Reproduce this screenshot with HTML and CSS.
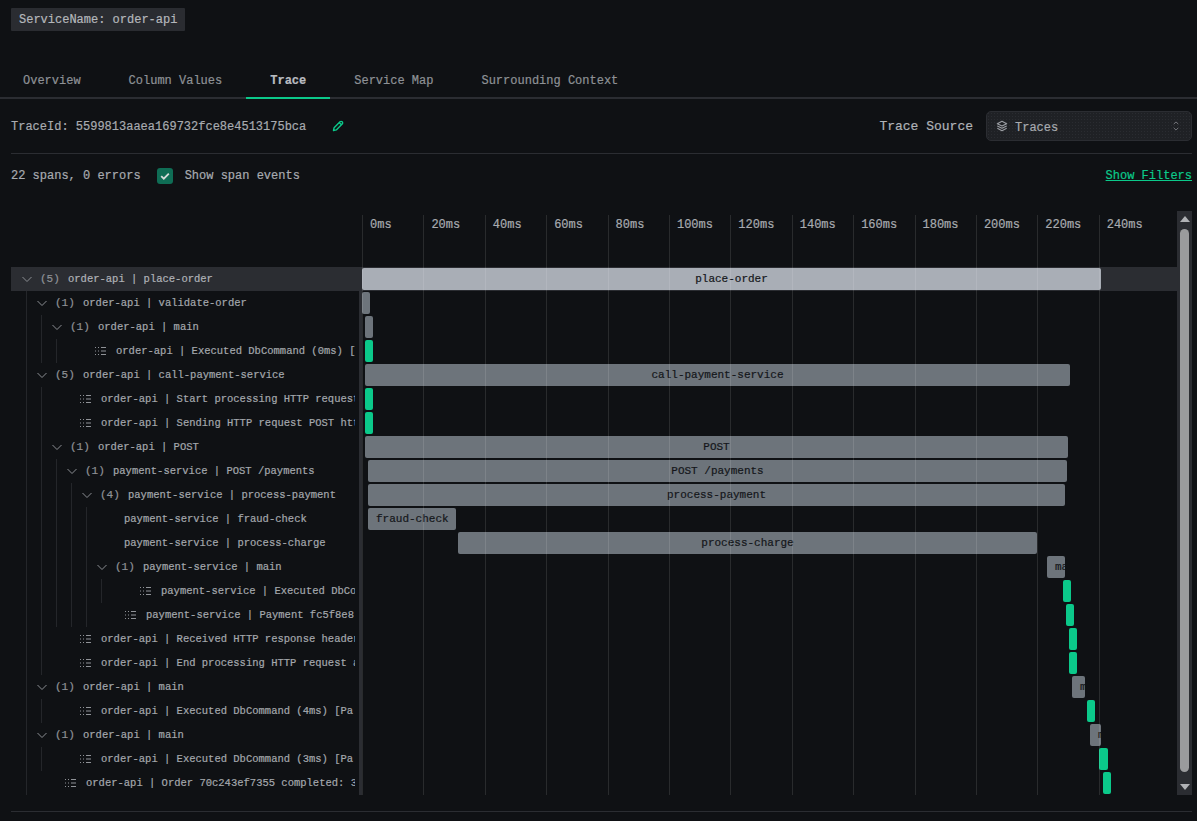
FILE: index.html
```html
<!DOCTYPE html>
<html lang="en">
<head>
<meta charset="utf-8">
<title>Trace</title>
<link rel="stylesheet" href="styles.css">
</head>
<body>
<svg class="defs" width="0" height="0" aria-hidden="true">
  <symbol id="chev" viewBox="0 0 14 14"><path d="M2.5 5l4.5 4.5L11.5 5" fill="none" stroke="currentColor" stroke-width="1"/></symbol>
  <symbol id="list" viewBox="0 0 12 10"><path d="M1 1.5h1M4 1.5h1M7 1.5h5M1 5h1M4 5h1M7 5h5M1 8.5h1M4 8.5h1M7 8.5h5" fill="none" stroke="currentColor" stroke-width="1"/></symbol>
</svg>
<main class="page">
  <div class="badge-row"><span class="badge">ServiceName: order-api</span></div>

  <nav class="tabs">
    <span class="tab">Overview</span>
    <span class="tab">Column Values</span>
    <span class="tab active">Trace</span>
    <span class="tab">Service Map</span>
    <span class="tab">Surrounding Context</span>
  </nav>

  <div class="idbar">
    <span class="traceid">TraceId: 5599813aaea169732fce8e4513175bca</span>
    <svg class="pencil" width="12" height="12" viewBox="0 0 12 12"><path d="M1.5 10.5l.6-2.8 5.9-5.9a1.3 1.3 0 0 1 2.2 2.2L4.3 9.9zM7.2 2.6l2.2 2.2" fill="none" stroke="currentColor" stroke-width="1.4" stroke-linejoin="round"/></svg>
    <span class="source-label">Trace Source</span>
    <div class="select">
      <svg class="layers" width="14" height="14" viewBox="0 0 24 24"><path d="M12 4l-8 4l8 4l8-4zM4 12l8 4l8-4M4 16l8 4l8-4" fill="none" stroke="currentColor" stroke-width="2" stroke-linejoin="round"/></svg>
      <span class="select-text">Traces</span>
      <svg class="updown" width="14" height="14" viewBox="0 0 24 24"><path d="M8 9l4-4l4 4M16 15l-4 4l-4-4" fill="none" stroke="currentColor" stroke-width="1.6"/></svg>
    </div>
  </div>

  <div class="summary">
    <span class="counts">22 spans, 0 errors</span>
    <span class="check"><svg width="12" height="12" viewBox="0 0 12 12"><path d="M2.2 6.2l2.6 2.5 5-5" fill="none" stroke="currentColor" stroke-width="1.8"/></svg></span>
    <span class="check-label">Show span events</span>
    <a class="filters" href="#">Show Filters</a>
  </div>

  <section class="trace">
    <div class="tree">
      <div class="tree-rows">
        <div class="row root"><svg class="chev"><use href="#chev"/></svg><span class="count">(5)</span><span class="name">order-api | place-order</span></div>
        <div class="group top">
          <div class="row"><svg class="chev"><use href="#chev"/></svg><span class="count">(1)</span><span class="name">order-api | validate-order</span></div>
          <div class="group">
            <div class="row"><svg class="chev"><use href="#chev"/></svg><span class="count">(1)</span><span class="name">order-api | main</span></div>
            <div class="group">
              <div class="row leaf"><svg class="lst"><use href="#list"/></svg><span class="name">order-api | Executed DbCommand (0ms) [</span></div>
            </div>
          </div>
          <div class="row"><svg class="chev"><use href="#chev"/></svg><span class="count">(5)</span><span class="name">order-api | call-payment-service</span></div>
          <div class="group">
            <div class="row leaf"><svg class="lst"><use href="#list"/></svg><span class="name">order-api | Start processing HTTP request</span></div>
            <div class="row leaf"><svg class="lst"><use href="#list"/></svg><span class="name">order-api | Sending HTTP request POST http</span></div>
            <div class="row"><svg class="chev"><use href="#chev"/></svg><span class="count">(1)</span><span class="name">order-api | POST</span></div>
            <div class="group">
              <div class="row"><svg class="chev"><use href="#chev"/></svg><span class="count">(1)</span><span class="name">payment-service | POST /payments</span></div>
              <div class="group">
                <div class="row"><svg class="chev"><use href="#chev"/></svg><span class="count">(4)</span><span class="name">payment-service | process-payment</span></div>
                <div class="group">
                  <div class="row leaf"><span class="name">payment-service | fraud-check</span></div>
                  <div class="row leaf"><span class="name">payment-service | process-charge</span></div>
                  <div class="row"><svg class="chev"><use href="#chev"/></svg><span class="count">(1)</span><span class="name">payment-service | main</span></div>
                  <div class="group">
                    <div class="row leaf"><svg class="lst"><use href="#list"/></svg><span class="name">payment-service | Executed DbCommand</span></div>
                  </div>
                  <div class="row leaf"><svg class="lst"><use href="#list"/></svg><span class="name">payment-service | Payment fc5f8e8</span></div>
                </div>
              </div>
            </div>
            <div class="row leaf"><svg class="lst"><use href="#list"/></svg><span class="name">order-api | Received HTTP response headers</span></div>
            <div class="row leaf"><svg class="lst"><use href="#list"/></svg><span class="name">order-api | End processing HTTP request after</span></div>
          </div>
          <div class="row"><svg class="chev"><use href="#chev"/></svg><span class="count">(1)</span><span class="name">order-api | main</span></div>
          <div class="group">
            <div class="row leaf"><svg class="lst"><use href="#list"/></svg><span class="name">order-api | Executed DbCommand (4ms) [Pa</span></div>
          </div>
          <div class="row"><svg class="chev"><use href="#chev"/></svg><span class="count">(1)</span><span class="name">order-api | main</span></div>
          <div class="group">
            <div class="row leaf"><svg class="lst"><use href="#list"/></svg><span class="name">order-api | Executed DbCommand (3ms) [Pa</span></div>
          </div>
          <div class="row leaf"><svg class="lst"><use href="#list"/></svg><span class="name">order-api | Order 70c243ef7355 completed: 3</span></div>
        </div>
      </div>
    </div>

    <div class="timeline">
      <div class="bars">
        <div class="lane hl"><div class="bar first" style="margin-left:0;width:739px">place-order</div></div>
        <div class="lane"><div class="bar empty" style="margin-left:0;width:8px"></div></div>
        <div class="lane"><div class="bar empty" style="margin-left:3px;width:8px"></div></div>
        <div class="lane"><div class="bar ev" style="margin-left:3px;width:8px"></div></div>
        <div class="lane"><div class="bar" style="margin-left:3px;width:705px">call-payment-service</div></div>
        <div class="lane"><div class="bar ev" style="margin-left:3px;width:8px"></div></div>
        <div class="lane"><div class="bar ev" style="margin-left:3px;width:8px"></div></div>
        <div class="lane"><div class="bar" style="margin-left:3px;width:703px">POST</div></div>
        <div class="lane"><div class="bar" style="margin-left:6px;width:699px">POST /payments</div></div>
        <div class="lane"><div class="bar" style="margin-left:6px;width:697px">process-payment</div></div>
        <div class="lane"><div class="bar" style="margin-left:6px;width:88px">fraud-check</div></div>
        <div class="lane"><div class="bar" style="margin-left:96px;width:579px">process-charge</div></div>
        <div class="lane"><div class="bar tight" style="margin-left:685px;width:18px">main</div></div>
        <div class="lane"><div class="bar ev" style="margin-left:701px;width:8px"></div></div>
        <div class="lane"><div class="bar ev" style="margin-left:704px;width:8px"></div></div>
        <div class="lane"><div class="bar ev" style="margin-left:707px;width:8px"></div></div>
        <div class="lane"><div class="bar ev" style="margin-left:707px;width:8px"></div></div>
        <div class="lane"><div class="bar tight" style="margin-left:710px;width:13px">main</div></div>
        <div class="lane"><div class="bar ev" style="margin-left:725px;width:8px"></div></div>
        <div class="lane"><div class="bar tight" style="margin-left:728px;width:11px">main</div></div>
        <div class="lane"><div class="bar ev" style="margin-left:737px;width:9px"></div></div>
        <div class="lane"><div class="bar ev" style="margin-left:741px;width:8px"></div></div>
      </div>
      <div class="ticks">
        <span class="tick">0ms</span><span class="tick">20ms</span><span class="tick">40ms</span><span class="tick">60ms</span><span class="tick">80ms</span><span class="tick">100ms</span><span class="tick">120ms</span><span class="tick">140ms</span><span class="tick">160ms</span><span class="tick">180ms</span><span class="tick">200ms</span><span class="tick">220ms</span><span class="tick">240ms</span>
      </div>
    </div>

    <div class="scrollbar">
      <span class="arrow up"></span>
      <span class="thumb"></span>
      <span class="arrow down"></span>
    </div>
  </section>

  <div class="foot"></div>
</main>
</body>
</html>
```
FILE: styles.css
```css
* { box-sizing: border-box; }
html, body { margin: 0; height: 100%; background: #0f1114; overflow: hidden; }
body { font-family: "Liberation Mono", "DejaVu Sans Mono", monospace; font-size: 12px; color: #a8abb0; -webkit-text-stroke: 0.2px; }
.defs { position: absolute; }
.page { display: flex; flex-direction: column; height: 821px; }

.badge-row { padding: 8px 0 0 11px; height: 31px; }
.badge { display: inline-block; height: 23px; line-height: 24px; padding: 0 8px; background: #2a2c31; color: #b4b7bb; border-radius: 1px; }

.tabs { display: flex; margin-top: 30px; height: 38px; border-bottom: 2px solid #2b2d32; }
.tab { height: 38px; padding: 0 24px; line-height: 40px; color: #8e9196; border-bottom: 2px solid transparent; }
.tab:first-child { margin-left: -1px; }
.tab.active { color: #b9bcc1; font-weight: 700; border-bottom-color: #0bc98a; }

.idbar { display: flex; align-items: center; height: 55px; margin: 0 5px 0 11px; border-bottom: 1px solid #2b2d32; }
.traceid { padding-top: 2px; }
.pencil { margin-left: 26px; color: #0bc98a; }
.source-label { margin-left: auto; font-size: 13px; color: #b0b3b8; }
.select { display: flex; align-items: center; width: 206px; height: 30px; margin-left: 13px; padding: 0 8px; background-color: #1f2125; background-image: radial-gradient(#2a2c31 0.6px, transparent 0.8px); background-size: 3px 3px; border: 1px solid #2b2d32; border-radius: 5px; }
.layers { color: #9a9da2; flex: none; }
.select-text { margin-left: 6px; margin-top: 4px; }
.updown { margin-left: auto; color: #77797e; }

.summary { display: flex; align-items: center; height: 42px; margin: 0 5px 0 11px; }
.counts, .check-label, .filters { padding-top: 2px; }
.check { display: flex; align-items: center; justify-content: center; width: 16px; height: 16px; margin-left: 16px; margin-top: 2px; background: #0f6d55; border-radius: 3px; color: #d5dbd9; }
.check-label { margin-left: 12px; }
.filters { margin-left: auto; color: #0bc98a; }

.trace { display: flex; height: 584px; margin-top: 15px; padding-left: 11px; margin-right: 5px; }
.tree { flex: none; width: 351px; padding-top: 56px; }
.tree-rows { border-right: 3px solid #2b2d32; height: 528px; }
.row { display: flex; align-items: center; height: 24px; padding-left: 8px; padding-right: 4px; font-size: 10.5px; color: #a4a8ad; white-space: nowrap; }
.row.root { background: #2b2d32; padding-left: 9px; color: #b0b3b8; }
.row.leaf { padding-left: 37px; }
.chev { flex: none; width: 14px; height: 14px; margin-right: 6px; color: #8b8e93; }
.lst { flex: none; width: 12px; height: 10px; margin-right: 10px; color: #8f9297; }
.count { flex: none; width: 19px; margin-right: 9px; font-size: 11px; color: #8f9297; }
.name { flex: 1; min-width: 0; overflow: hidden; }
.group { margin-left: 14px; border-left: 1px solid #24262a; }
.group.top { margin-left: 15px; }

.timeline { position: relative; flex: none; width: 815px; margin-top: 4px; }
.bars { margin-top: 52px; }
.lane { height: 24px; padding: 1px 0; }
.lane.hl { background: #2b2d32; }
.bar { height: 22px; line-height: 22px; padding: 0 8px; background: #6d747b; color: #14161a; border-radius: 2px; font-size: 11px; text-align: center; white-space: nowrap; overflow: hidden; }
.bar.tight { padding: 0 0 0 8px; text-align: left; }
.bar.empty { padding: 0; }
.bar.first { background-color: #a9aeb6; background-image: radial-gradient(#9297 0.5px, transparent 0.7px); background-size: 6px 6px; }
.bar.ev { background: #0bc98a; padding: 0; }
.ticks { position: absolute; top: 0; left: 0; bottom: 0; display: flex; pointer-events: none; }
.tick { flex: none; width: 61.4px; padding-left: 7px; line-height: 20px; border-left: 1px solid rgba(255, 255, 255, 0.11); white-space: nowrap; }

.scrollbar { display: flex; flex-direction: column; align-items: center; flex: none; width: 15px; padding: 5px 0; background: #2b2d32; }
.arrow { flex: none; width: 0; height: 0; border-left: 5px solid transparent; border-right: 5px solid transparent; }
.arrow.up { border-bottom: 6px solid #b0b2b5; }
.arrow.down { border-top: 6px solid #b0b2b5; }
.thumb { flex: 1; width: 9px; margin: 7px 0 12px; background: #9a9b9d; border-radius: 4.5px; }

.foot { margin: 16px 5px 0 11px; border-top: 1px solid #2b2d32; }
```
